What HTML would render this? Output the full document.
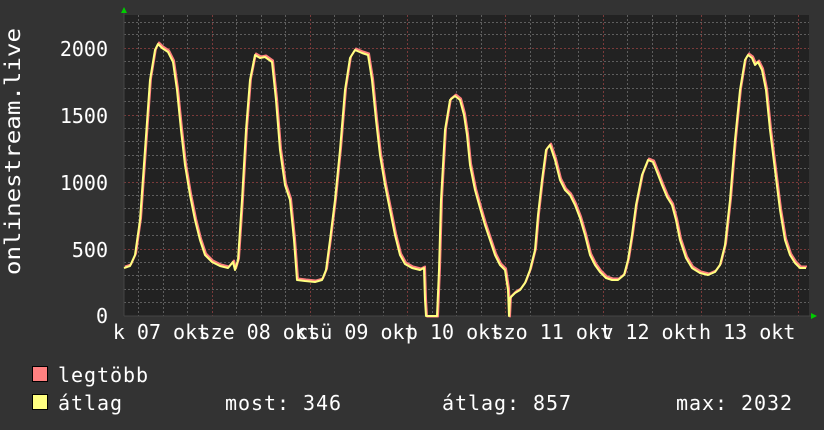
<!DOCTYPE html>
<html><head><meta charset="utf-8"><style>
html,body{margin:0;padding:0;background:#333333;}
svg{display:block;}
text{font-family:"DejaVu Sans Mono","Liberation Mono",monospace;fill:#ffffff;}
</style></head><body>
<svg width="824" height="430" viewBox="0 0 824 430" xmlns="http://www.w3.org/2000/svg">
<rect width="824" height="430" fill="#333333"/>
<rect x="124" y="15" width="685" height="301" fill="#222222"/>
<g stroke="#5e5e5e" stroke-width="1" stroke-dasharray="2,2">
<line x1="124" y1="22.5" x2="809" y2="22.5"/>
<line x1="124" y1="34.5" x2="809" y2="34.5"/>
<line x1="124" y1="61.5" x2="809" y2="61.5"/>
<line x1="124" y1="74.5" x2="809" y2="74.5"/>
<line x1="124" y1="88.5" x2="809" y2="88.5"/>
<line x1="124" y1="101.5" x2="809" y2="101.5"/>
<line x1="124" y1="128.5" x2="809" y2="128.5"/>
<line x1="124" y1="141.5" x2="809" y2="141.5"/>
<line x1="124" y1="155.5" x2="809" y2="155.5"/>
<line x1="124" y1="168.5" x2="809" y2="168.5"/>
<line x1="124" y1="195.5" x2="809" y2="195.5"/>
<line x1="124" y1="208.5" x2="809" y2="208.5"/>
<line x1="124" y1="222.5" x2="809" y2="222.5"/>
<line x1="124" y1="235.5" x2="809" y2="235.5"/>
<line x1="124" y1="262.5" x2="809" y2="262.5"/>
<line x1="124" y1="275.5" x2="809" y2="275.5"/>
<line x1="124" y1="289.5" x2="809" y2="289.5"/>
<line x1="124" y1="302.5" x2="809" y2="302.5"/>
</g>
<g stroke="#7a3a3a" stroke-width="1" stroke-dasharray="2,2">
<line x1="124" y1="48.5" x2="809" y2="48.5"/>
<line x1="124" y1="115.5" x2="809" y2="115.5"/>
<line x1="124" y1="182.5" x2="809" y2="182.5"/>
<line x1="124" y1="249.5" x2="809" y2="249.5"/>
<line x1="212.5" y1="15" x2="212.5" y2="316"/>
<line x1="310.5" y1="15" x2="310.5" y2="316"/>
<line x1="407.5" y1="15" x2="407.5" y2="316"/>
<line x1="505.5" y1="15" x2="505.5" y2="316"/>
<line x1="603.5" y1="15" x2="603.5" y2="316"/>
<line x1="701.5" y1="15" x2="701.5" y2="316"/>
<line x1="798.5" y1="15" x2="798.5" y2="316"/>
</g>
<g stroke="#5e5e5e" stroke-width="1" stroke-dasharray="2,2">
<line x1="138.5" y1="15" x2="138.5" y2="316"/><line x1="163.5" y1="15" x2="163.5" y2="316"/><line x1="187.5" y1="15" x2="187.5" y2="316"/>
<line x1="236.5" y1="15" x2="236.5" y2="316"/><line x1="261.5" y1="15" x2="261.5" y2="316"/><line x1="285.5" y1="15" x2="285.5" y2="316"/>
<line x1="334.5" y1="15" x2="334.5" y2="316"/><line x1="359.5" y1="15" x2="359.5" y2="316"/><line x1="383.5" y1="15" x2="383.5" y2="316"/>
<line x1="432.5" y1="15" x2="432.5" y2="316"/><line x1="456.5" y1="15" x2="456.5" y2="316"/><line x1="481.5" y1="15" x2="481.5" y2="316"/>
<line x1="530.5" y1="15" x2="530.5" y2="316"/><line x1="554.5" y1="15" x2="554.5" y2="316"/><line x1="578.5" y1="15" x2="578.5" y2="316"/>
<line x1="627.5" y1="15" x2="627.5" y2="316"/><line x1="652.5" y1="15" x2="652.5" y2="316"/><line x1="676.5" y1="15" x2="676.5" y2="316"/>
<line x1="725.5" y1="15" x2="725.5" y2="316"/><line x1="749.5" y1="15" x2="749.5" y2="316"/><line x1="774.5" y1="15" x2="774.5" y2="316"/>
</g>
<line x1="124" y1="316" x2="812" y2="316" stroke="#444" stroke-width="1"/>
<line x1="124" y1="12" x2="124" y2="316" stroke="#444" stroke-width="1"/>
<polygon points="121,13 127,13 124,7" fill="#00cc00"/>
<polygon points="811,313 811,319 817,316" fill="#00cc00"/>

<g fill="none" stroke-linejoin="round">
<polyline transform="translate(1,-1.5)" stroke="#ff7f7f" stroke-width="2" points="124,268 130,266 135,255 140,220 145,150 150,80 155,50 158,44 162,48 168,52 173,62 177,90 181,130 185,165 190,195 195,220 200,240 205,255 212,262 220,266 228,268 233,262 235,270 238,260 242,200 246,130 250,80 255,55 260,58 265,57 272,62 276,100 280,150 285,185 290,200 294,240 297,280 305,281 315,282 322,280 326,270 330,240 335,200 340,150 345,90 350,58 355,50 362,53 368,55 372,80 376,120 380,155 385,185 390,210 395,235 400,255 405,264 412,268 420,270 424,268 425,300 426,318 437,318 439,270 441,200 445,130 450,100 455,96 460,100 464,115 467,135 470,165 475,190 480,208 485,225 490,240 495,255 500,265 505,270 508,290 509,318 510,298 515,293 520,290 525,283 530,270 535,250 538,215 542,180 546,150 550,145 555,160 560,180 565,190 570,195 575,205 580,218 585,235 590,255 595,265 600,272 606,278 612,280 618,280 624,275 628,260 632,235 636,205 642,175 648,160 653,162 657,172 662,185 667,197 672,205 676,220 680,240 686,258 692,268 700,273 708,275 715,272 720,265 725,245 730,200 735,140 740,90 745,60 748,55 752,58 755,65 758,62 762,70 766,90 770,130 775,170 780,210 785,240 790,255 795,263 800,268 806,268"/>
<polyline stroke="#ffff80" stroke-width="2" points="124,268 130,266 135,255 140,220 145,150 150,80 155,50 158,44 162,48 168,52 173,62 177,90 181,130 185,165 190,195 195,220 200,240 205,255 212,262 220,266 228,268 233,262 235,270 238,260 242,200 246,130 250,80 255,55 260,58 265,57 272,62 276,100 280,150 285,185 290,200 294,240 297,280 305,281 315,282 322,280 326,270 330,240 335,200 340,150 345,90 350,58 355,50 362,53 368,55 372,80 376,120 380,155 385,185 390,210 395,235 400,255 405,264 412,268 420,270 424,268 425,300 426,316 437,316 439,270 441,200 445,130 450,100 455,96 460,100 464,115 467,135 470,165 475,190 480,208 485,225 490,240 495,255 500,265 505,270 508,290 509,316 510,298 515,293 520,290 525,283 530,270 535,250 538,215 542,180 546,150 550,145 555,160 560,180 565,190 570,195 575,205 580,218 585,235 590,255 595,265 600,272 606,278 612,280 618,280 624,275 628,260 632,235 636,205 642,175 648,160 653,162 657,172 662,185 667,197 672,205 676,220 680,240 686,258 692,268 700,273 708,275 715,272 720,265 725,245 730,200 735,140 740,90 745,60 748,55 752,58 755,65 758,62 762,70 766,90 770,130 775,170 780,210 785,240 790,255 795,263 800,268 806,268"/>
</g>

<g font-size="20" text-anchor="end">
<text x="108" y="56">2000</text>
<text x="108" y="123">1500</text>
<text x="108" y="190">1000</text>
<text x="108" y="257">500</text>
<text x="108" y="323">0</text>
</g>
<text x="20" y="151.5" font-size="21" text-anchor="middle" textLength="247" lengthAdjust="spacingAndGlyphs" transform="rotate(-90 20 151.5)">onlinestream.live</text>
<g font-size="20" text-anchor="middle">
<text x="161" y="339">k 07 okt</text>
<text x="258.7" y="339">sze 08 okt</text>
<text x="356.4" y="339">csü 09 okt</text>
<text x="454.1" y="339">p 10 okt</text>
<text x="551.8" y="339">szo 11 okt</text>
<text x="649.5" y="339">v 12 okt</text>
<text x="747.2" y="339">h 13 okt</text>
</g>
<rect x="32.5" y="366.5" width="15" height="15" fill="#ff8080" stroke="#000" stroke-width="1"/>
<rect x="32.5" y="394.5" width="15" height="15" fill="#ffff80" stroke="#000" stroke-width="1"/>
<g font-size="20">
<text x="58" y="382" textLength="90" lengthAdjust="spacing">legtöbb</text>
<text x="58" y="410" textLength="64" lengthAdjust="spacing">átlag</text>
<text x="225" y="410" textLength="116" lengthAdjust="spacing">most: 346</text>
<text x="442" y="410" textLength="129" lengthAdjust="spacing">átlag: 857</text>
<text x="676" y="410" textLength="116" lengthAdjust="spacing">max: 2032</text>
</g>
</svg>
</body></html>
